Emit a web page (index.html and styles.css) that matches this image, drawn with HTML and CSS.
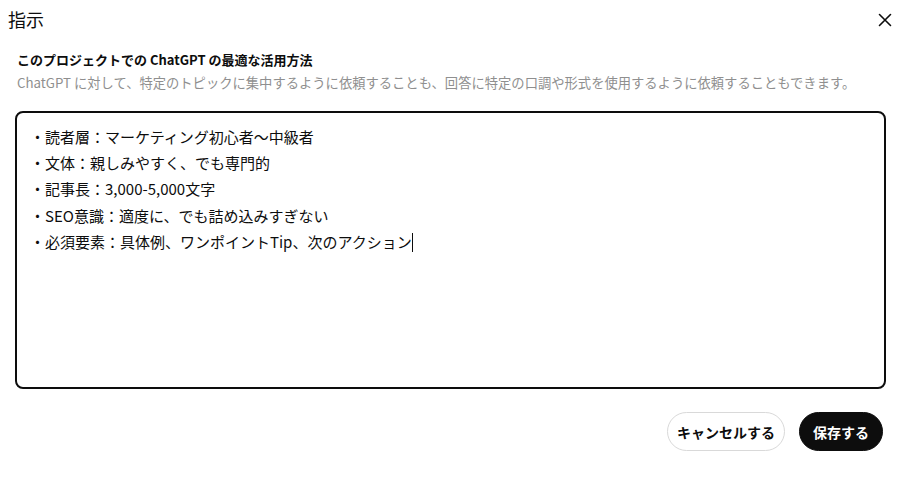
FILE: index.html
```html
<!DOCTYPE html>
<html lang="ja">
<head>
<meta charset="utf-8">
<link rel="stylesheet" href="styles.css">
</head>
<body>
<div class="dialog">
  <div class="header">
    <div class="title">指示</div>
    <button class="close" aria-label="閉じる">
      <svg width="14" height="14" viewBox="0 0 14 14"><path d="M1.5 1.5 L12.5 12.5 M12.5 1.5 L1.5 12.5" stroke="#0d0d0d" stroke-width="1.6" stroke-linecap="round" fill="none"/></svg>
    </button>
  </div>
  <div class="intro">
    <div class="heading">このプロジェクトでの ChatGPT の最適な活用方法</div>
    <div class="desc">ChatGPT に対して、特定のトピックに集中するように依頼することも、回答に特定の口調や形式を使用するように依頼することもできます。</div>
  </div>
  <div class="editor">
    <div class="line">・読者層：マーケティング初心者〜中級者</div>
    <div class="line">・文体：親しみやすく、でも専門的</div>
    <div class="line">・記事長：3,000-5,000文字</div>
    <div class="line">・SEO意識：適度に、でも詰め込みすぎない</div>
    <div class="line">・必須要素：具体例、ワンポイントTip、次のアクション<span class="caret"></span></div>
  </div>
  <div class="actions">
    <button class="btn btn-cancel">キャンセルする</button>
    <button class="btn btn-save">保存する</button>
  </div>
</div>
</body>
</html>
```
FILE: styles.css
```css
* { box-sizing: border-box; }
html, body {
  margin: 0;
  padding: 0;
  background: #ffffff;
}
body {
  font-family: "Noto Sans CJK JP", "Noto Sans", sans-serif;
  color: #0d0d0d;
  width: 910px;
  height: 478px;
  overflow: hidden;
}
.dialog {
  display: flex;
  flex-direction: column;
}
.header {
  display: flex;
  align-items: center;
  justify-content: space-between;
  height: 40px;
  padding: 0 17px 0 8px;
}
.title {
  font-size: 18px;
  line-height: 24px;
  font-weight: 400;
  margin-top: -2px;
}
.close {
  border: 0;
  background: transparent;
  padding: 0;
  width: 16px;
  height: 16px;
  display: flex;
  align-items: center;
  justify-content: center;
  cursor: pointer;
}
.intro {
  padding: 10px 0 0 17px;
}
.heading {
  font-size: 13px;
  font-weight: 700;
  line-height: 20px;
}
.desc {
  font-size: 13.3px;
  line-height: 22px;
  margin-top: 2px;
  color: #8f8f8f;
}
.editor {
  margin: 17px 0 0 15px;
  width: 871px;
  height: 278px;
  border: 2px solid #0d0d0d;
  border-radius: 8px;
  padding: 11px 0 0 13px;
  font-size: 15px;
  line-height: 26.2px;
}
.caret {
  display: inline-block;
  width: 1px;
  height: 19px;
  background: #0d0d0d;
  vertical-align: -4px;
}
.actions {
  display: flex;
  justify-content: flex-end;
  gap: 14px;
  padding: 23px 27px 0 0;
}
.btn {
  font-family: "Noto Sans CJK JP", "Noto Sans", sans-serif;
  font-size: 14px;
  font-weight: 700;
  height: 39px;
  border-radius: 20px;
  cursor: pointer;
}
.btn-cancel {
  padding: 0 9px;
  background: #ffffff;
  border: 1px solid #d9d9d9;
  color: #0d0d0d;
}
.btn-save {
  padding: 0 13px;
  background: #0d0d0d;
  border: 1px solid #0d0d0d;
  color: #ffffff;
}
```
